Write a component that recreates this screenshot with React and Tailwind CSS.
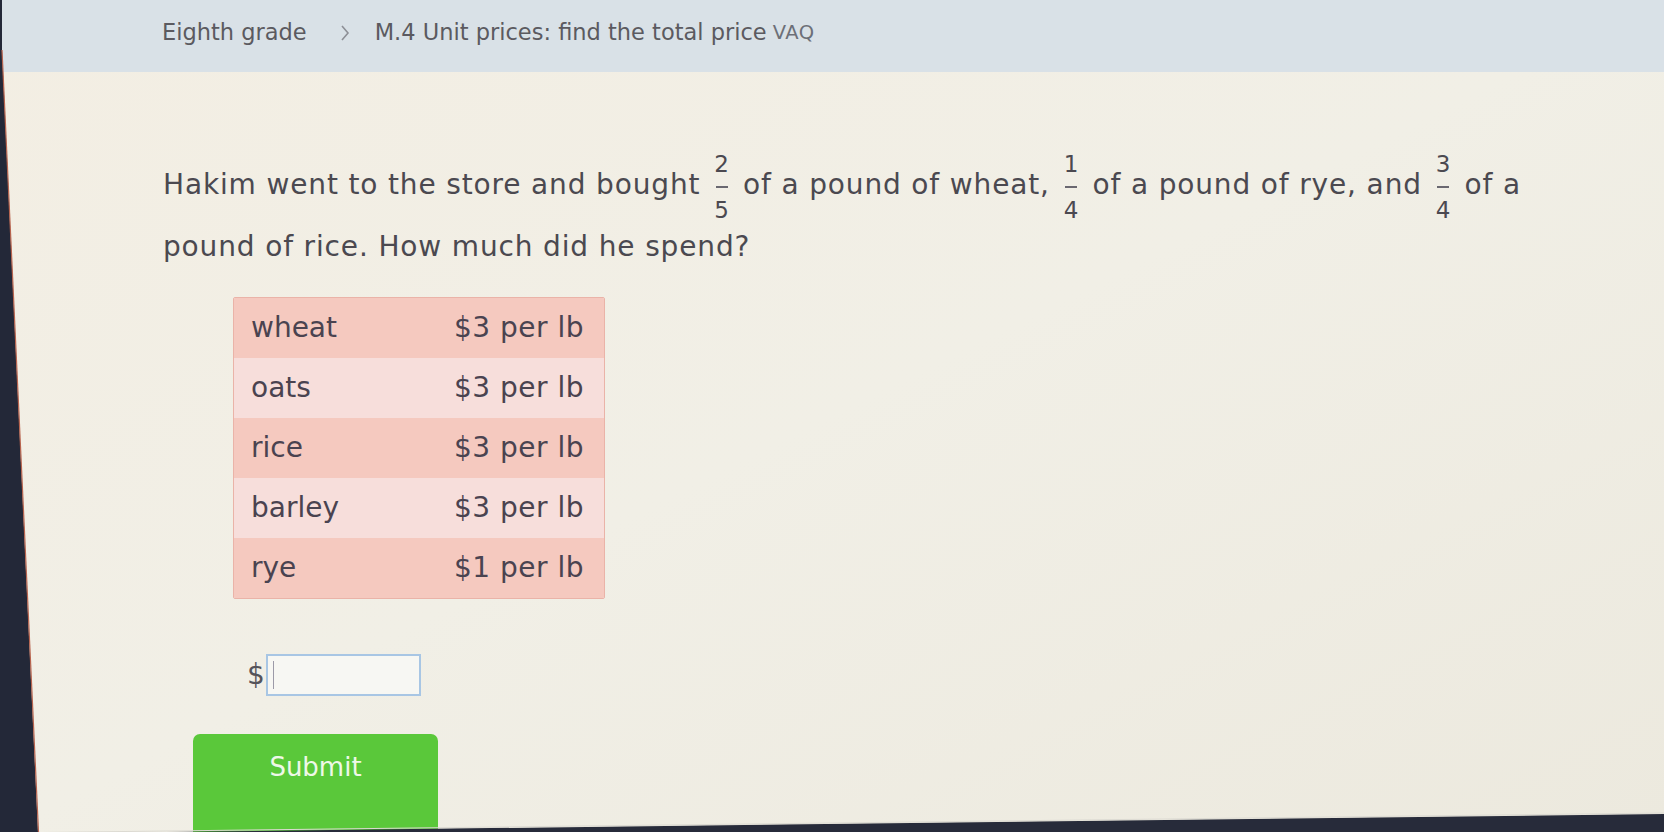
import React from "react";

function Frac({ n, d }) {
  return (
    <span className="inline-flex flex-col items-center align-middle mx-[14px] -my-[4px] text-[23px] leading-[22px] tracking-normal relative top-[1px]">
      <span>{n}</span>
      <span className="block w-[12px] h-[1.5px] bg-[#6a6870] my-[11px]"></span>
      <span>{d}</span>
    </span>
  );
}

const rows = [
  ["wheat", "$3 per lb"],
  ["oats", "$3 per lb"],
  ["rice", "$3 per lb"],
  ["barley", "$3 per lb"],
  ["rye", "$1 per lb"],
];

export default function App() {
  return (
    <div
      className="relative w-[1664px] h-[832px] overflow-hidden bg-gradient-to-br from-[#f3eee3] via-[#f1efe6] to-[#ece9de]"
      style={{ fontFamily: '"DejaVu Sans", Verdana, sans-serif' }}
    >
      {/* top breadcrumb bar */}
      <div className="h-[72px] bg-[#d9e1e7] flex items-center pl-[162px] text-[#5b5a60] pb-[6px]">
        <span className="text-[22.5px]">Eighth grade</span>
        <svg className="ml-[33px]" width="10" height="18" viewBox="0 0 10 18">
          <path d="M2 2 L8 9 L2 16" fill="none" stroke="#8d8f96" strokeWidth="1.6" />
        </svg>
        <span className="ml-[25px] text-[22.5px]">M.4 Unit prices: find the total price</span>
        <span className="ml-[6px] text-[19.5px] tracking-[0.5px] text-[#6c6f78]">VAQ</span>
      </div>

      {/* content */}
      <div className="pl-[163px] pt-[82px] text-[#4b4950]">
        <p className="text-[28px] tracking-[0.85px] leading-[62px] w-[1400px]">
          Hakim went to the store and bought
          <Frac n="2" d="5" />
          of a pound of wheat,
          <Frac n="1" d="4" />
          of a pound of rye, and
          <Frac n="3" d="4" />
          of a pound of rice. How much did he spend?
        </p>

        <div className="ml-[70px] mt-[19px] w-[372px] border border-[#eab3a8] rounded-[2px] overflow-hidden">
          {rows.map(([a, b], i) => (
            <div
              key={a}
              className={
                "flex items-center h-[60px] text-[28px] text-[#4a4350] " +
                (i % 2 === 0 ? "bg-[#f5c9bf]" : "bg-[#f7dedb]")
              }
            >
              <span className="w-[220px] pl-[17px]">{a}</span>
              <span className="tracking-[0.5px]">{b}</span>
            </div>
          ))}
        </div>

        <div className="ml-[84px] mt-[55px] flex items-center">
          <span className="text-[28px] text-[#55535a] mr-[1px]">$</span>
          <div className="w-[155px] h-[42px] border-2 border-[#a8c6e4] bg-[#f7f7f3] flex items-center pl-[5px]">
            <span className="block w-[1.5px] h-[28px] bg-[#9c9aa8]"></span>
          </div>
        </div>

        <div className="ml-[30px] mt-[38px] w-[245px] h-[100px] bg-[#5ac83a] rounded-t-[7px] flex justify-center pt-[14px] text-[26px] text-[#eef8e8]">
          Submit
        </div>
      </div>

      {/* monitor bezel (photo edges) */}
      <svg
        className="absolute inset-0 pointer-events-none"
        width="1664"
        height="832"
        viewBox="0 0 1664 832"
      >
        <polygon points="0,0 2,0 2,50 38,832 0,832" fill="#232838" />
        <line x1="2" y1="50" x2="38.5" y2="832" stroke="#b8644f" strokeWidth="1.2" />
        <polygon points="0,834 1664,814 1664,832 0,832" fill="#272b3a" />
        <line x1="0" y1="833" x2="1664" y2="813" stroke="#dcdad2" strokeWidth="1" />
      </svg>
    </div>
  );
}
